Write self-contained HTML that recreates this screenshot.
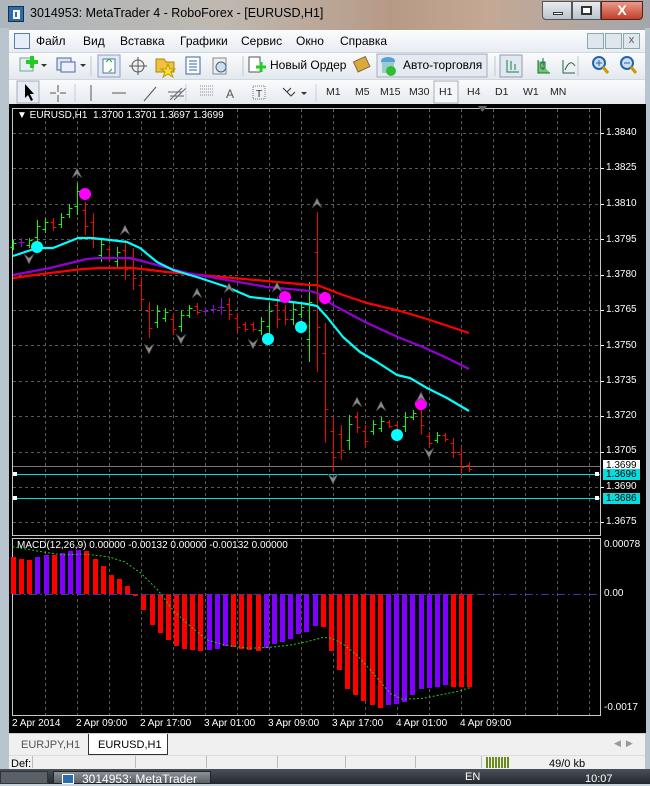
<!DOCTYPE html>
<html><head><meta charset="utf-8">
<style>
*{margin:0;padding:0;box-sizing:border-box}
body{width:650px;height:784px;overflow:hidden;background:#c9d3dc;font-family:"Liberation Sans",sans-serif;position:relative}
.a{position:absolute}
#title{left:0;top:0;width:650px;height:30px;background:linear-gradient(90deg,#aeb6bd 0%,#bfb8b0 35%,#b79a86 60%,#c4a894 75%,#a3a7ab 100%)}
.tt{left:30px;top:6px;font-size:12.5px;color:#000}
.menu{top:30px;left:9px;width:636px;height:22px;background:linear-gradient(#fbfcfd,#e8edf3)}
.mi{top:34px;font-size:12px;color:#000}
.tb{left:9px;width:636px;background:linear-gradient(#fafbfc,#e4e9ef);border-top:1px solid #d0d7df}
.tf{font-size:10.5px;color:#222;top:86px}
.chart{left:9px;top:104px;width:637px;height:629px;background:#000}
.lbl{font-size:10px;color:#fff;white-space:nowrap}
</style></head><body>
<div id="title" class="a"></div>
<div class="a" style="left:8px;top:6px;width:16px;height:16px;background:#2b6cb0;border:1px solid #134;"><div class="a" style="left:4px;top:3px;width:7px;height:9px;border:2px solid #fff;border-right-width:3px"></div></div>
<div class="a tt">3014953: MetaTrader 4 - RoboForex - [EURUSD,H1]</div>
<div class="a" style="left:542px;top:1px;width:30px;height:19px;border:1px solid #555;border-radius:0 0 0 4px;background:linear-gradient(#e8ecf0,#b9c3cc)"><div class="a" style="left:10px;top:10px;width:10px;height:3px;background:#fff;border:1px solid #333"></div></div>
<div class="a" style="left:572px;top:1px;width:29px;height:19px;border:1px solid #555;background:linear-gradient(#e8ecf0,#b9c3cc)"><div class="a" style="left:8px;top:4px;width:11px;height:9px;border:2px solid #333;background:#fff"></div></div>
<div class="a" style="left:601px;top:1px;width:42px;height:19px;border:1px solid #522;border-radius:0 0 4px 0;background:linear-gradient(#e99a8a,#c2402a);color:#fff;font-weight:bold;font-size:14px;text-align:center;line-height:17px">X</div>
<div class="a" style="left:0;top:28px;width:9px;height:756px;background:#b8c4ce"></div>
<div class="a" style="left:645px;top:28px;width:5px;height:756px;background:#b8c4ce"></div>

<div class="a menu"></div>
<div class="a" style="left:14px;top:33px;width:16px;height:16px;border:1px solid #5a7ea8;background:#e6eef8"></div>
<div class="a mi" style="left:36px">Файл</div>
<div class="a mi" style="left:83px">Вид</div>
<div class="a mi" style="left:120px">Вставка</div>
<div class="a mi" style="left:180px">Графики</div>
<div class="a mi" style="left:241px">Сервис</div>
<div class="a mi" style="left:296px">Окно</div>
<div class="a mi" style="left:340px">Справка</div>
<div class="a" style="left:587px;top:33px;width:17px;height:16px;border:1px solid #8aa;background:#dfe6ee"></div>
<div class="a" style="left:605px;top:33px;width:17px;height:16px;border:1px solid #8aa;background:#dfe6ee"></div>
<div class="a" style="left:623px;top:33px;width:17px;height:16px;border:1px solid #8aa;background:#dfe6ee;font-size:11px;text-align:center;color:#555">x</div>

<div class="a tb" style="top:52px;height:27px"></div>
<div class="a tb" style="top:79px;height:26px"></div>
<svg class="a" style="left:0;top:52px" width="650" height="53">
<g stroke-width="1">
<rect x="20" y="6" width="13" height="13" fill="#e8eef6" stroke="#6a8"/><path d="M26 10h12M32 4v12" stroke="#2c2" stroke-width="4"/>
<path d="M41 12l3 3 3-3z" fill="#333"/>
<rect x="57" y="6" width="14" height="12" fill="#dde6f2" stroke="#4a6a9a"/><rect x="61" y="10" width="14" height="10" fill="#eef" stroke="#4a6a9a"/>
<path d="M80 12l3 3 3-3z" fill="#333"/>
<rect x="98" y="3" width="22" height="22" fill="#dfeaf8" stroke="#99b"/><rect x="103" y="7" width="12" height="14" fill="#fff" stroke="#579"/><path d="M106 10l3-3 3 3M109 20l3-3" stroke="#2a2" fill="none"/>
<circle cx="138" cy="14" r="6" fill="none" stroke="#555"/><path d="M138 5v18M129 14h18" stroke="#555"/>
<path d="M156 7h8l2 3h8v10h-18z" fill="#f0c040" stroke="#a80"/><path d="M168 12l2 5 5 0-4 3 2 5-5-3-5 3 2-5-4-3h5z" fill="#fd3" stroke="#b90"/>
<rect x="186" y="5" width="14" height="17" fill="#fff" stroke="#36a"/><path d="M189 9h8M189 12h8M189 15h8M189 18h8" stroke="#36a"/>
<rect x="213" y="6" width="13" height="16" fill="#eee" stroke="#888"/><circle cx="221" cy="15" r="5" fill="#cde" stroke="#468"/>
<rect x="249" y="5" width="11" height="15" fill="#fff" stroke="#555"/><path d="M256 15h10M261 10v10" stroke="#2c2" stroke-width="3"/>
<rect x="355" y="7" width="13" height="11" fill="#d9a93a" stroke="#864" transform="rotate(-25 361 12)"/>
<rect x="377" y="2" width="110" height="23" fill="#e3eaf2" stroke="#aab"/>
<ellipse cx="388" cy="9" rx="7" ry="4" fill="#5aa0d8"/><rect x="382" y="10" width="12" height="11" fill="#9cc"/><circle cx="391" cy="19" r="5" fill="#3b3"/>
<rect x="500" y="3" width="22" height="22" fill="#e0e8f2" stroke="#99a"/>
<path d="M507 8v12h12M511 9v9M515 12v6" stroke="#274" fill="none"/>
<path d="M538 8v13h12M543 6v12M541 10h4v6h-4z" stroke="#264" fill="#6c6"/>
<path d="M563 8v13h12M565 18q5-12 10-4" stroke="#264" fill="none"/>
<circle cx="599" cy="11" r="6" fill="#cde" stroke="#26a" stroke-width="2"/><path d="M596 11h6M599 8v6" stroke="#26a"/><path d="M603 15l5 6" stroke="#c90" stroke-width="3"/>
<circle cx="627" cy="11" r="6" fill="#cde" stroke="#26a" stroke-width="2"/><path d="M624 11h6" stroke="#26a"/><path d="M631 15l5 6" stroke="#c90" stroke-width="3"/>
<path d="M243 4v20M578 4v20M495 4v20M91 4v20" stroke="#bcc"/>
<rect x="17" y="29" width="22" height="22" fill="#e6ecf3" stroke="#aab"/>
<path d="M25 32v14l3-3 3 6 2-1-3-6h4z" fill="#000"/>
<path d="M58 33v7M58 43v7M50 41h6M60 41h6" stroke="#555"/>
<path d="M91 33v16M112 41h14M144 49l12-14" stroke="#555"/>
<path d="M170 48l12-12M174 48l12-12M168 40h14M170 44h14" stroke="#666"/>
<path d="M200 34h14M200 37h14M200 40h14M200 43h14" stroke="#888" stroke-dasharray="1 1"/>
<text x="226" y="46" font-size="12" fill="#555" font-family="Liberation Sans">A</text>
<rect x="253" y="34" width="12" height="13" fill="none" stroke="#777" stroke-dasharray="1 1"/><text x="256" y="45" font-size="10" fill="#333" font-family="Liberation Sans">T</text>
<path d="M283 36l4 4 4-4M287 40l4 4 4-4" stroke="#333" fill="none"/><path d="M301 40l3 3 3-3z" fill="#333"/>
<path d="M75 32v18M186 32v18M316 32v18" stroke="#ccd"/>
<rect x="434" y="29" width="24" height="22" fill="#f4f7fa" stroke="#aab"/>
</g></svg>
<div class="a tf" style="left:326px">M1</div>
<div class="a tf" style="left:355px">M5</div>
<div class="a tf" style="left:380px">M15</div>
<div class="a tf" style="left:409px">M30</div>
<div class="a tf" style="left:439px">H1</div>
<div class="a tf" style="left:467px">H4</div>
<div class="a tf" style="left:495px">D1</div>
<div class="a tf" style="left:523px">W1</div>
<div class="a tf" style="left:550px">MN</div>
<div class="a" style="left:270px;top:58px;font-size:12px">Новый Ордер</div>
<div class="a" style="left:403px;top:58px;font-size:12px">Авто-торговля</div>

<div class="a chart"></div>
<svg id="c" class="a" style="left:0;top:0" width="650" height="784" shape-rendering="crispEdges"></svg>

<div class="a lbl" style="left:17px;top:110px">&#9660; EURUSD,H1&nbsp; 1.3700 1.3701 1.3697 1.3699</div>
<div class="a lbl" style="left:606px;top:127px">1.3840</div>
<div class="a lbl" style="left:606px;top:162px">1.3825</div>
<div class="a lbl" style="left:606px;top:198px">1.3810</div>
<div class="a lbl" style="left:606px;top:234px">1.3795</div>
<div class="a lbl" style="left:606px;top:269px">1.3780</div>
<div class="a lbl" style="left:606px;top:304px">1.3765</div>
<div class="a lbl" style="left:606px;top:340px">1.3750</div>
<div class="a lbl" style="left:606px;top:375px">1.3735</div>
<div class="a lbl" style="left:606px;top:410px">1.3720</div>
<div class="a lbl" style="left:606px;top:445px">1.3705</div>
<div class="a lbl" style="left:606px;top:481px">1.3690</div>
<div class="a lbl" style="left:606px;top:516px">1.3675</div>
<div class="a lbl" style="left:603px;top:460px;width:37px;height:11px;background:#fff;color:#000;padding-left:3px;line-height:11px">1.3699</div>
<div class="a lbl" style="left:603px;top:469px;width:37px;height:11px;background:#00e0e0;color:#000;padding-left:3px;line-height:11px">1.3696</div>
<div class="a lbl" style="left:603px;top:493px;width:37px;height:11px;background:#00e0e0;color:#000;padding-left:3px;line-height:11px">1.3686</div>
<div class="a lbl" style="left:17px;top:540px">MACD(12,26,9) 0.00000 -0.00132 0.00000 -0.00132 0.00000</div>
<div class="a lbl" style="left:604px;top:539px">0.00078</div>
<div class="a lbl" style="left:604px;top:588px">0.00</div>
<div class="a lbl" style="left:604px;top:702px">-0.0017</div>
<div class="a lbl" style="left:12px;top:718px">2 Apr 2014</div>
<div class="a lbl" style="left:76px;top:718px">2 Apr 09:00</div>
<div class="a lbl" style="left:140px;top:718px">2 Apr 17:00</div>
<div class="a lbl" style="left:204px;top:718px">3 Apr 01:00</div>
<div class="a lbl" style="left:268px;top:718px">3 Apr 09:00</div>
<div class="a lbl" style="left:332px;top:718px">3 Apr 17:00</div>
<div class="a lbl" style="left:396px;top:718px">4 Apr 01:00</div>
<div class="a lbl" style="left:460px;top:718px">4 Apr 09:00</div>

<div class="a" style="left:9px;top:733px;width:636px;height:22px;background:#f0f0f0;border-top:1px solid #ccc"></div>
<div class="a" style="left:88px;top:734px;width:80px;height:21px;background:#fff;border:1px solid #333;border-top:none"></div>
<div class="a" style="left:21px;top:739px;font-size:11px;color:#555">EURJPY,H1</div>
<div class="a" style="left:98px;top:739px;font-size:11px;color:#000">EURUSD,H1</div>
<div class="a" style="left:614px;top:738px;font-size:9px;color:#999">&#9664;&nbsp;&nbsp;&#9654;</div>
<div class="a" style="left:9px;top:755px;width:636px;height:14px;background:#f0f0f0;border-top:1px solid #ddd"></div>
<div class="a" style="left:11px;top:758px;font-size:11px">Def:</div>
<div class="a" style="left:32px;top:756px;width:1px;height:12px;background:#bbb"></div>
<div class="a" style="left:135px;top:756px;width:1px;height:12px;background:#bbb"></div>
<div class="a" style="left:206px;top:756px;width:1px;height:12px;background:#bbb"></div>
<div class="a" style="left:277px;top:756px;width:1px;height:12px;background:#bbb"></div>
<div class="a" style="left:345px;top:756px;width:1px;height:12px;background:#bbb"></div>
<div class="a" style="left:415px;top:756px;width:1px;height:12px;background:#bbb"></div>
<div class="a" style="left:481px;top:756px;width:1px;height:12px;background:#bbb"></div>
<div class="a" style="left:486px;top:757px;width:23px;height:11px;background:repeating-linear-gradient(90deg,#6a8a20 0 2px,#f0f0f0 2px 3px)"></div>
<div class="a" style="left:549px;top:758px;font-size:11px">49/0 kb</div>
<div class="a" style="left:0;top:769px;width:650px;height:15px;background:linear-gradient(#4a5058,#22282e)"></div>
<div class="a" style="left:0;top:771px;width:48px;height:13px;background:#5a6068;border:1px solid #333"></div>
<div class="a" style="left:53px;top:771px;width:158px;height:13px;background:linear-gradient(#8a9098,#5a6068);border:1px solid #222"></div>
<div class="a" style="left:62px;top:774px;width:12px;height:10px;background:#2b6cb0;border:1px solid #fff"></div>
<div class="a" style="left:82px;top:772px;font-size:12px;color:#fff">3014953: MetaTrader</div>
<div class="a" style="left:465px;top:771px;font-size:11px;color:#fff">EN</div>
<div class="a" style="left:585px;top:773px;font-size:11px;color:#fff">10:07</div>

<script>
const NS='http://www.w3.org/2000/svg',S=document.getElementById('c');
function el(t,a){const e=document.createElementNS(NS,t);for(const k in a)e.setAttribute(k,a[k]);S.appendChild(e);return e;}
const gs={stroke:'#5a5a5a','stroke-dasharray':'3 3','stroke-width':1};
for(let x=45;x<600;x+=32){el('line',Object.assign({x1:x+.5,y1:109,x2:x+.5,y2:535},gs));el('line',Object.assign({x1:x+.5,y1:539,x2:x+.5,y2:715},gs));}
for(let k=0;k<12;k++){const y=Math.round(133+35.4*k)+.5;el('line',Object.assign({x1:13,y1:y,x2:600,y2:y},gs));el('line',{x1:600,y1:y,x2:604,y2:y,stroke:'#fff'});}
el('rect',{x:12.5,y:108.5,width:588,height:427,fill:'none',stroke:'#c8c8c8'});
el('rect',{x:12.5,y:538.5,width:588,height:177,fill:'none',stroke:'#c8c8c8'});
el('path',{d:'M478 106h9l-4.5 6z',fill:'#666'});
el('line',{x1:13,y1:466.5,x2:600,y2:466.5,stroke:'#777'});
el('line',{x1:13,y1:474.5,x2:600,y2:474.5,stroke:'#00e0e0'});
el('line',{x1:13,y1:498.5,x2:600,y2:498.5,stroke:'#00e0e0'});
el('rect',{x:595,y:472,width:4,height:4,fill:'#fff'});el('rect',{x:595,y:496,width:4,height:4,fill:'#fff'});
el('rect',{x:13,y:472,width:4,height:4,fill:'#fff'});el('rect',{x:13,y:496,width:4,height:4,fill:'#fff'});
const z3=[[405,435,'g'],[398,425,'p'],[398,430,'g'],[345,415,'g'],[340,385,'g'],[340,378,'r'],[325,370,'g'],[298,340,'g'],[235,330,'g'],[290,390,'r'],[325,430,'r'],[400,470,'g'],[420,470,'r'],[425,485,'g'],[405,525,'r'],[430,555,'r'],[515,610,'r'],[590,700,'r'],[600,670,'g'],[610,650,'g'],[625,690,'r'],[615,680,'g'],[600,640,'g'],[595,630,'r'],[605,630,'p'],[600,625,'p'],[580,630,'p'],[580,645,'r'],[625,680,'r'],[650,680,'r'],[650,680,'r'],[635,690,'g'],[595,690,'g'],[575,670,'r'],[600,660,'r'],[595,660,'g'],[595,640,'g'],[530,770,'g'],[320,800,'r']];
const r4=[[323,443,'r'],[417,472,'r'],[425,460,'r'],[415,450,'g'],[412,433,'r'],[425,447,'r'],[420,435,'g'],[417,432,'g'],[420,428,'r'],[422,433,'r'],[412,432,'g'],[410,420,'g'],[400,435,'r'],[432,447,'r'],[432,443,'g'],[433,442,'r'],[438,458,'r'],[447,475,'r'],[462,472,'r']];
const bars=z3.map(b=>[105+b[0]/3,105+b[1]/3,b[2]]).concat(r4);
const col={g:'#00ff00',r:'#ff0000',p:'#9b00e0'};
bars.forEach((b,i)=>{const x=13+8*i+.5,h=b[1]-b[0];let o,c;
 if(b[2]=='g'){o=b[0]+.72*h;c=b[0]+.25*h}else if(b[2]=='r'){o=b[0]+.25*h;c=b[0]+.72*h}else{o=c=b[0]+.5*h}
 o=Math.round(o)+.5;c=Math.round(c)+.5;
 el('path',{d:`M${x} ${Math.round(b[0])}V${Math.round(b[1])}M${x-3} ${o}H${x}M${x} ${c}H${x+3}`,stroke:col[b[2]],fill:'none'});});
function line(p,c){el('polyline',{points:p.map(q=>q.join(',')).join(' '),fill:'none',stroke:c,'stroke-width':2.2,'shape-rendering':'auto','stroke-linejoin':'round'});}
line([[13,278],[50,273],[83,269],[100,268],[133,268],[167,272],[200,275],[233,278],[277,282],[310,285],[317,285],[343,295],[367,303],[400,311],[427,319],[469,333]],'#ff0000');
line([[13,275],[50,268],[87,259],[100,258],[130,258],[157,265],[187,273],[227,280],[267,287],[310,291],[317,293],[333,305],[367,323],[400,338],[423,347],[447,358],[469,369]],'#9400d3');
line([[13,256],[37,248],[53,248],[78,238],[92,238],[110,240],[127,242],[140,248],[157,262],[173,270],[200,278],[227,287],[250,297],[277,300],[307,304],[317,306],[327,317],[343,337],[360,352],[377,362],[397,375],[410,378],[427,388],[447,398],[469,411]],'#00ffff');
[[37,247],[268,339],[301,327],[397,435]].forEach(p=>el('circle',{cx:p[0],cy:p[1],r:6,fill:'#00ffff','shape-rendering':'auto'}));
[[85,194],[285,297],[325,298],[421,404]].forEach(p=>el('circle',{cx:p[0],cy:p[1],r:6,fill:'#ff00ff','shape-rendering':'auto'}));
[[77,173],[125,230],[197,293],[229,288],[277,287],[317,203],[357,402],[381,406],[421,397]].forEach(p=>el('path',{d:`M${p[0]-5} ${p[1]+5}L${p[0]} ${p[1]-5}L${p[0]+5} ${p[1]+5}L${p[0]} ${p[1]+1}z`,fill:'#8a8a8a',stroke:'#444','stroke-width':.6,'shape-rendering':'auto'}));
[[29,259],[149,349],[181,339],[253,344],[333,479],[429,453]].forEach(p=>el('path',{d:`M${p[0]-5} ${p[1]-5}L${p[0]} ${p[1]+5}L${p[0]+5} ${p[1]-5}L${p[0]} ${p[1]-1}z`,fill:'#8a8a8a',stroke:'#444','stroke-width':.6,'shape-rendering':'auto'}));
const m=[[82,'r'],[88,'r'],[90,'r'],[80,'p'],[75,'p'],[76,'r'],[68,'p'],[62,'p'],[60,'p'],[64,'r'],[87,'r'],[107,'r'],[135,'r'],[147,'r'],[168,'r'],[197,'r'],[240,'r'],[285,'r'],[310,'r'],[330,'r'],[348,'r'],[357,'r'],[360,'r'],[362,'r'],[360,'p'],[357,'p'],[347,'p'],[350,'r'],[357,'r'],[360,'r'],[362,'r'],[355,'p'],[342,'p'],[335,'p'],[327,'p'],[313,'p'],[305,'p'],[288,'p'],[292,'r'],[362,'r'],[420,'r'],[477,'r'],[495,'r'],[513,'r'],[525,'r'],[533,'r'],[525,'p'],[521,'p'],[515,'p'],[495,'p'],[477,'p'],[474,'p'],[470,'p'],[465,'p'],[470,'r'],[470,'r'],[472,'r']];
const mc={r:'#ff0000',p:'#8000ff'};
m.forEach((b,i)=>{const x=Math.round(11+8.15*i),y=Math.round(530+b[0]/3),z=594;const t=Math.min(y,z),h=Math.max(2,Math.abs(y-z));el('rect',{x:x,y:t,width:5,height:h,fill:mc[b[1]]});});
el('line',{x1:13,y1:594.5,x2:600,y2:594.5,stroke:'#3a3aa0','stroke-dasharray':'8 3 2 3'});
const sg=[[30,50],[100,65],[150,75],[200,72],[260,80],[300,95],[340,130],[380,180],[420,245],[460,290],[500,330],[540,345],[600,355],[650,352],[700,345],[740,335],[780,322],[800,325],[830,345],[860,375],[900,430],[940,490],[970,508],[1020,505],[1060,495],[1100,485],[1135,472]].map(p=>[(p[0]/2.41).toFixed(1),(530+p[1]/3).toFixed(1)]);
el('polyline',{points:sg.map(q=>q.join(',')).join(' '),fill:'none',stroke:'#22cc22','stroke-dasharray':'2 2','shape-rendering':'auto'});
</script>
</body></html>
